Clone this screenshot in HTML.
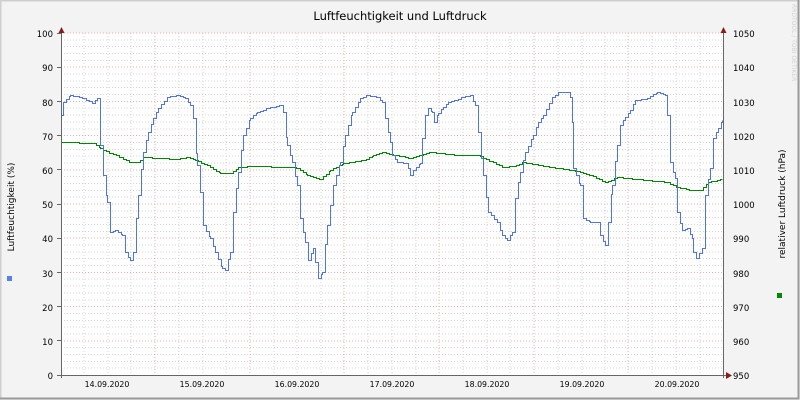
<!DOCTYPE html>
<html><head><style>
body{margin:0;background:#f3f3f3}
svg{display:block;font-family:"DejaVu Sans","Liberation Sans",sans-serif}
</style></head><body>
<svg width="800" height="400" xmlns="http://www.w3.org/2000/svg">
<rect x="0" y="0" width="800" height="400" fill="#f3f3f3"/>
<path d="M0.5 399.5V0.5H799.5" stroke="#cfcfcf" fill="none" stroke-width="2"/>
<path d="M0 398.5H798.5V0" stroke="#9a9a9a" fill="none" stroke-width="2"/>
<rect x="61" y="33" width="662" height="342" fill="#fff"/>
<g fill="none" stroke-width="1" shape-rendering="crispEdges">
<path stroke="#d4d4d4" stroke-dasharray="1,2" d="
M61 368.2H723M61 361.3H723M61 354.5H723M61 347.6H723
M61 334H723M61 327.1H723M61 320.3H723M61 313.4H723
M61 299.8H723M61 292.9H723M61 286.1H723M61 279.2H723
M61 265.6H723M61 258.7H723M61 251.9H723M61 245H723
M61 231.4H723M61 224.5H723M61 217.7H723M61 210.8H723
M61 197.2H723M61 190.3H723M61 183.5H723M61 176.6H723
M61 163H723M61 156.1H723M61 149.3H723M61 142.4H723
M61 128.8H723M61 121.9H723M61 115.1H723M61 108.2H723
M61 94.6H723M61 87.7H723M61 80.9H723M61 74H723
M61 60.4H723M61 53.5H723M61 46.7H723M61 39.8H723"/>
<path stroke="#d4d4d4" stroke-dasharray="1,2" d="
M84 33V375M108 33V375M131 33V375
M179 33V375M203 33V375M226 33V375
M274 33V375M297 33V375M321 33V375
M368 33V375M392 33V375M416 33V375
M463 33V375M487 33V375M510 33V375
M558 33V375M582 33V375M605 33V375
M652 33V375M676 33V375M700 33V375"/>
<path stroke="#eab0b0" stroke-dasharray="1,2" d="
M61 340.8H723M61 306.6H723M61 272.4H723M61 238.2H723M61 204H723
M61 169.8H723M61 135.6H723M61 101.4H723M61 67.2H723M61 33H723
M155 33V375M250 33V375M344 33V375M439 33V375M534 33V375M628 33V375"/>
</g>
<g transform="translate(0.5,0.5)">
<path id="g" fill="none" stroke="#008800" stroke-width="1" data-p="61,142 93,143 100,148 110,153 120,157 130,162 137,162 143,157 160,158 177,159 187,157 195,160 207,165 220,173 230,173 238,167 250,166 290,167 297,168 307,175 320,179 330,170 343,163 363,160 373,155 383,152 390,154 410,158 420,155 430,152 457,155 477,155 490,161 503,167 513,166 523,162 540,165 557,168 577,171 590,175 605,182 617,177 637,179 667,182 677,187 690,190 700,190 708,182 722,179"/>
<path id="b" fill="none" stroke="#4f74e6" stroke-width="1" data-p="61,115 63,102 70,95 83,98 92,103 97,98 98,98 100,145 103,175 107,202 110,232 115,230 122,235 125,252 130,260 133,252 138,195 143,152 148,132 153,118 158,108 167,97 177,95 185,98 190,105 193,118 197,165 200,192 203,225 210,238 215,252 222,268 225,270 230,252 233,212 238,172 243,135 250,118 257,112 267,108 280,105 283,112 287,145 292,162 297,185 300,218 305,242 308,260 313,248 315,262 318,278 322,272 327,225 333,185 340,162 345,135 352,112 360,98 367,95 377,97 382,102 385,118 390,142 392,155 397,162 405,163 408,168 410,175 413,170 420,163 422,138 425,115 428,108 432,112 434,122 438,113 443,107 448,102 455,100 462,97 470,95 475,105 478,132 483,175 488,212 497,222 502,235 507,240 512,232 515,198 520,172 525,152 533,135 538,122 543,115 552,97 558,92 567,92 570,97 572,122 573,168 580,185 583,218 590,222 597,222 600,235 605,245 608,222 612,185 617,145 620,125 625,117 630,110 635,100 647,98 657,92 665,95 667,115 670,162 675,178 677,212 682,230 687,228 692,238 693,252 696,258 702,248 705,195 710,168 713,138 718,128 722,120"/>
</g>
<path d="M61.5 30V378M723.5 30V378M58 375.5H727" stroke="#666" stroke-width="1" fill="none"/>
<path d="M57 375.5h4M57 340.5h4M57 306.5h4M57 272.5h4M57 238.5h4M57 204.5h4M57 169.5h4M57 135.5h4M57 101.5h4M57 67.5h4M57 33.5h4" stroke="#666"/>
<path d="M58.5 33l3-6 3 6zM720.5 33l3-6 3 6zM726 372l6 3.5-6 3.5z" fill="#8b1a1a"/>
<g font-size="8.5" fill="#000" text-anchor="end">
<text x="53" y="379">0</text><text x="53" y="345">10</text><text x="53" y="311">20</text><text x="53" y="277">30</text><text x="53" y="242">40</text><text x="53" y="208">50</text><text x="53" y="174">60</text><text x="53" y="140">70</text><text x="53" y="106">80</text><text x="53" y="71">90</text><text x="53" y="37">100</text>
</g>
<g font-size="8.5" fill="#000">
<text x="733" y="379">950</text><text x="733" y="345">960</text><text x="733" y="311">970</text><text x="733" y="277">980</text><text x="733" y="242">990</text><text x="733" y="208">1000</text><text x="733" y="174">1010</text><text x="733" y="140">1020</text><text x="733" y="106">1030</text><text x="733" y="71">1040</text><text x="733" y="37">1050</text>
</g>
<g font-size="7.8" fill="#000" text-anchor="middle">
<text x="107" y="387">14.09.2020</text><text x="202" y="387">15.09.2020</text><text x="297" y="387">16.09.2020</text><text x="392" y="387">17.09.2020</text><text x="487" y="387">18.09.2020</text><text x="582" y="387">19.09.2020</text><text x="677" y="387">20.09.2020</text>
</g>
<text x="400" y="20" font-size="11.5" text-anchor="middle" fill="#000">Luftfeuchtigkeit und Luftdruck</text>
<text transform="translate(14,207) rotate(-90)" font-size="9" text-anchor="middle" fill="#000">Luftfeuchtigkeit (%)</text>
<text transform="translate(785,204) rotate(-90)" font-size="9" text-anchor="middle" fill="#000">relativer Luftdruck (hPa)</text>
<text transform="translate(792,4) rotate(90)" font-size="6" fill="#d0d0d0">RRDTOOL / TOBI OETIKER</text>
<rect x="7" y="276" width="5" height="5" fill="#5b7fe8"/>
<rect x="777" y="293" width="5" height="5" fill="#008800"/>
</svg>
<script>
['g','b'].forEach(function(id){
 var el=document.getElementById(id);
 var p=el.getAttribute('data-p').trim().split(/\s+/).map(function(s){return s.split(',').map(Number);});
 var d='M'+p[0][0]+' '+Math.round(p[0][1]);
 for(var i=1;i<p.length;i++){
  var x0=p[i-1][0],y0=p[i-1][1],x1=p[i][0],y1=p[i][1],x;
  for(x=x0+3;x<x1;x+=3){
   var y=Math.round(y0+(y1-y0)*(x-x0)/(x1-x0));
   d+='H'+x+'V'+y;
  }
  d+='H'+x1+'V'+Math.round(y1);
 }
 el.setAttribute('d',d);
});
</script>
</body></html>
